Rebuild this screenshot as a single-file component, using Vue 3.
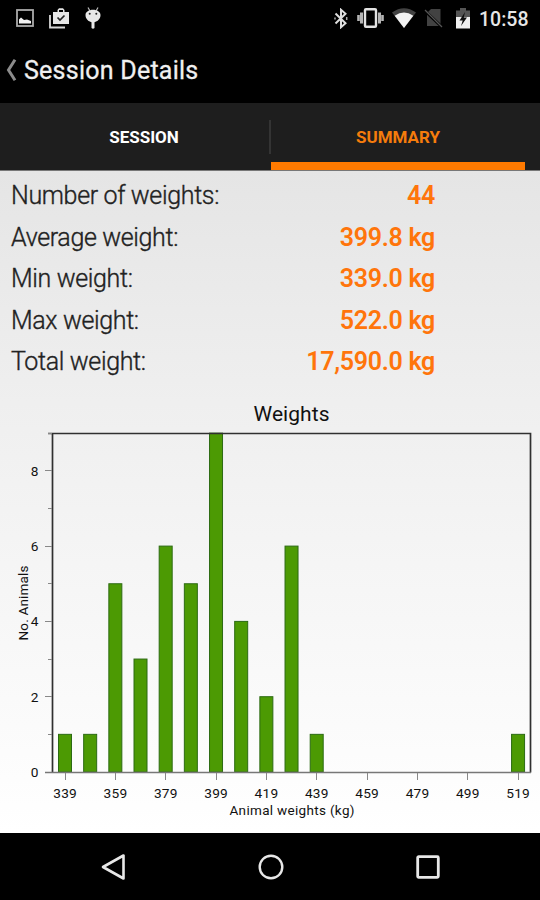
<template>
  <div class="screen">
    <header class="status-bar">
      <div class="status-left">
        <svg width="18" height="18" viewBox="0 0 18 18">
          <rect x="1" y="1" width="16" height="16" fill="none" stroke="#aaa" stroke-width="1.8" />
          <path d="M3 14.5v-4l2-2 3 2.5 3-.5 4 1.5v2.5z" fill="#f2f2f2" />
        </svg>
        <svg width="21" height="21" viewBox="0 0 21 21">
          <path d="M1 7v12.5h15" fill="none" stroke="#d8d8d8" stroke-width="1.8" />
          <path d="M4 4h4.500V2l1.500-1.700h4L15.500 2v2H20v12H4zM10 4h4V2h-4z" fill="#e6e6e6" fill-rule="evenodd" />
          <path d="M8.500 9.500l2.500 2.500 4.500-4.500" fill="none" stroke="#222" stroke-width="1.7" />
        </svg>
        <svg width="16" height="22" viewBox="0 0 16 22">
          <path d="M3 .5l2 3.500M13 .5l-2 3.500" stroke="#bbb" stroke-width="1.2" />
          <path d="M.5 8C.5 5 4 2.800 8 2.800S15.500 5 15.500 8c0 4-3 6.500-6 7.200V21q-1.500 1.500-3 0v-5.800C3.500 14.500 .5 12 .5 8z" fill="#e8e8e8" />
          <circle cx="4.7" cy="6.7" r="1" fill="#222" />
          <circle cx="11.3" cy="6.7" r="1" fill="#222" />
        </svg>
      </div>
      <div class="status-right">
        <svg width="14" height="21" viewBox="0 0 14 21">
          <path d="M1.500 5.500l10 9.700-4.500 4V1.800l4.500 4-10 9.700" fill="none" stroke="#dedede" stroke-width="2" />
          <path d="M12.700 9v3M1 9.500v2" stroke="#aaa" stroke-width="1.5" />
        </svg>
        <svg class="vibrate" width="27" height="20" viewBox="0 0 27 20">
          <rect x="8" y="1.2" width="11" height="17.6" rx="1" fill="none" stroke="#e2e2e2" stroke-width="2.4" />
          <path d="M4.500 4.500v11M22.500 4.500v11" stroke="#b5b5b5" stroke-width="3" />
          <path d="M1.500 7v6M25.500 7v6" stroke="#b5b5b5" stroke-width="2.6" />
        </svg>
        <svg class="wifi" width="24" height="20" viewBox="0 0 24 20">
          <path d="M0 4.500Q12-4 24 4.500L12 20z" fill="#424242" />
          <path d="M2.700 7.700Q12 1.300 21.300 7.700L12 20z" fill="#f2f2f2" />
        </svg>
        <svg class="sim" width="20" height="20" viewBox="0 0 20 20">
          <path d="M7 1h9.500v17H3V5z" fill="#424242" />
          <path d="M0 2l18 17" stroke="#000" stroke-width="3" />
          <path d="M1 2l17 17" stroke="#555" stroke-width="1.3" />
        </svg>
        <svg class="battery" width="14" height="21" viewBox="0 0 14 21">
          <path d="M0 2.500h4V0h6v2.500h4V9H0z" fill="#555" />
          <path d="M0 9h14v11.500H0z" fill="#f0f0f0" />
          <path d="M9 4L3.500 12.500h3.200L5 18l6-8.500H7.800z" fill="#111" />
        </svg>
        <span class="clock">10:58</span>
      </div>
    </header>

    <div class="title-bar">
      <svg width="11" height="22" viewBox="0 0 11 22">
        <path d="M9 .8L2.500 11 9 21.200" fill="none" stroke="#8c8c8c" stroke-width="3" />
      </svg>
      <h1>Session Details</h1>
    </div>

    <nav class="tabs">
      <button
        v-for="tab in tabs"
        :key="tab"
        class="tab"
        :class="{ active: tab === activeTab }"
        @click="activeTab = tab"
      >
        <span>{{ tab }}</span>
      </button>
    </nav>

    <main class="content">
      <dl class="stats">
        <div v-for="stat in stats" :key="stat.label" class="stat">
          <dt>{{ stat.label }}</dt>
          <dd>{{ stat.value }}</dd>
        </div>
      </dl>

      <svg class="chart" width="540" height="443" viewBox="0 390 540 443">
        <text x="291.5" y="420.5" class="chart-title" textLength="76">Weights</text>

        <!-- bars -->
        <rect
          v-for="bar in bars"
          :key="bar.weight"
          :x="xPos(bar.weight) - 6.5"
          :y="yPos(bar.count)"
          width="13"
          :height="BASE_Y - yPos(bar.count)"
          class="bar"
        />

        <!-- plot frame -->
        <path d="M48 433.5H530.5V772.5" class="frame" />
        <path d="M52.5 433V773" class="frame" />
        <path d="M45 772.5H531" class="axis" />

        <!-- ticks -->
        <path v-for="n in 9" :key="'t' + n" :d="`M${n % 2 ? 48 : 45} ${Math.floor(yPos(n)) + 0.5}H52`" class="tick" />
        <text v-for="n in [0, 2, 4, 6, 8]" :key="'y' + n" x="34.5" :y="yPos(n) + 4.8" class="tick-label">{{ n }}</text>
        <g v-for="w in xLabels" :key="'x' + w">
          <path :d="`M${Math.floor(xPos(w)) + 0.5} 773V780`" class="tick" />
          <text :x="xPos(w)" y="798.4" class="tick-label" textLength="23.5">{{ w }}</text>
        </g>

        <text x="292" y="815" class="axis-label" textLength="125">Animal weights (kg)</text>
        <text transform="translate(28 603) rotate(-90)" class="axis-label" textLength="75">No. Animals</text>
      </svg>
    </main>

    <footer class="nav-bar">
      <svg width="26" height="28" viewBox="0 0 26 28">
        <path d="M3 14L23.500 2.500v23z" fill="none" stroke="#e8e8e8" stroke-width="2.6" stroke-linejoin="round" />
      </svg>
      <svg width="26" height="26" viewBox="0 0 26 26">
        <circle cx="13" cy="13" r="11.3" fill="none" stroke="#e8e8e8" stroke-width="2.4" />
      </svg>
      <svg width="24" height="24" viewBox="0 0 24 24">
        <rect x="1.7" y="1.7" width="20.6" height="20.6" rx="1" fill="none" stroke="#e8e8e8" stroke-width="2.8" />
      </svg>
    </footer>
  </div>
</template>

<script setup>
import { ref } from 'vue'

const tabs = ['SESSION', 'SUMMARY']
const activeTab = ref('SUMMARY')

const stats = [
  { label: 'Number of weights:', value: '44' },
  { label: 'Average weight:', value: '399.8 kg' },
  { label: 'Min weight:', value: '339.0 kg' },
  { label: 'Max weight:', value: '522.0 kg' },
  { label: 'Total weight:', value: '17,590.0 kg' }
]

const bars = [
  { weight: 339, count: 1 },
  { weight: 349, count: 1 },
  { weight: 359, count: 5 },
  { weight: 369, count: 3 },
  { weight: 379, count: 6 },
  { weight: 389, count: 5 },
  { weight: 399, count: 9 },
  { weight: 409, count: 4 },
  { weight: 419, count: 2 },
  { weight: 429, count: 6 },
  { weight: 439, count: 1 },
  { weight: 519, count: 1 }
]

const xLabels = [339, 359, 379, 399, 419, 439, 459, 479, 499, 519]

const BASE_Y = 772

const xPos = (weight) => 65 + (weight - 339) * 2.517
const yPos = (count) => BASE_Y - count * 37.65
</script>

<style>
body {
  background: #000;
}
</style>

<style scoped>
.screen {
  width: 540px;
  height: 900px;
  display: flex;
  flex-direction: column;
  background: #000;
  font-family: Roboto, "Liberation Sans", sans-serif;
  overflow: hidden;
}

.status-bar {
  height: 36px;
  display: flex;
  align-items: center;
  justify-content: space-between;
  padding: 0 11px 0 16px;
}

.status-left,
.status-right {
  display: flex;
  align-items: center;
}

.status-left {
  gap: 15px;
}

.vibrate {
  margin-left: 9px;
}

.wifi {
  margin-left: 8px;
}

.sim {
  margin-left: 8px;
}

.battery {
  margin-left: 12px;
}

.clock {
  width: 50px;
  margin-left: 9px;
  font-size: 19.5px;
  font-weight: 500;
  line-height: 36px;
  color: #e6e6e6;
  padding-top: 3px;
}

.title-bar {
  height: 67px;
  display: flex;
  align-items: center;
  gap: 7px;
  padding-left: 6px;
}

.title-bar h1 {
  margin: 0;
  padding-top: 2px;
  font-size: 25px;
  font-weight: 400;
  letter-spacing: 0.25px;
  -webkit-text-stroke: 0.3px #f0f0f0;
  color: #f0f0f0;
}

.tabs {
  height: 67px;
  display: flex;
  padding: 0 15px 0 17px;
  background: #1e1e1e;
}

.tab {
  flex: 1;
  display: flex;
  align-items: center;
  justify-content: center;
  padding: 9px 0 0;
  border: 0;
  border-bottom: 8px solid transparent;
  background: none;
  font-family: inherit;
  font-size: 17px;
  font-weight: 700;
  color: #fff;
}

.tab:first-child {
  background: linear-gradient(#343434, #343434) no-repeat right 17px / 2px 34px;
}

.tab.active {
  color: #f57c0c;
  border-bottom-color: #ff7a00;
}

.content {
  height: 663px;
  box-sizing: border-box;
  border-top: 1px solid #777;
  background: linear-gradient(#e5e5e5, #efefef 35%, #fff);
}

.stats {
  margin: 0;
  padding: 4px 105px 0 11px;
  height: 215px;
}

.stat {
  height: 41.5px;
  display: flex;
  align-items: center;
  justify-content: space-between;
  font-size: 25px;
}

.stat dt {
  font-weight: 300;
  letter-spacing: -0.35px;
  -webkit-text-stroke: 0.35px #222;
  color: #222;
}

.stat dd {
  margin: 0;
  font-size: 25px;
  font-weight: 600;
  letter-spacing: -0.3px;
  color: #ff750b;
}

.chart {
  display: block;
}

.chart text {
  text-anchor: middle;
  fill: #111;
}

.chart-title {
  font-size: 21px;
}

.tick-label {
  font-size: 13.7px;
}

.axis-label {
  font-size: 13.5px;
}

.bar {
  fill: #4c9a03;
  stroke: #2c6b13;
  stroke-width: 1;
}

.frame {
  fill: none;
  stroke: #303030;
  stroke-width: 1.7;
}

.axis {
  stroke: #777;
  stroke-width: 1.5;
}

.tick {
  stroke: #888;
  stroke-width: 1;
}

.nav-bar {
  flex: 1;
  display: flex;
  align-items: center;
  justify-content: space-between;
  padding: 0 100px;
}
</style>
